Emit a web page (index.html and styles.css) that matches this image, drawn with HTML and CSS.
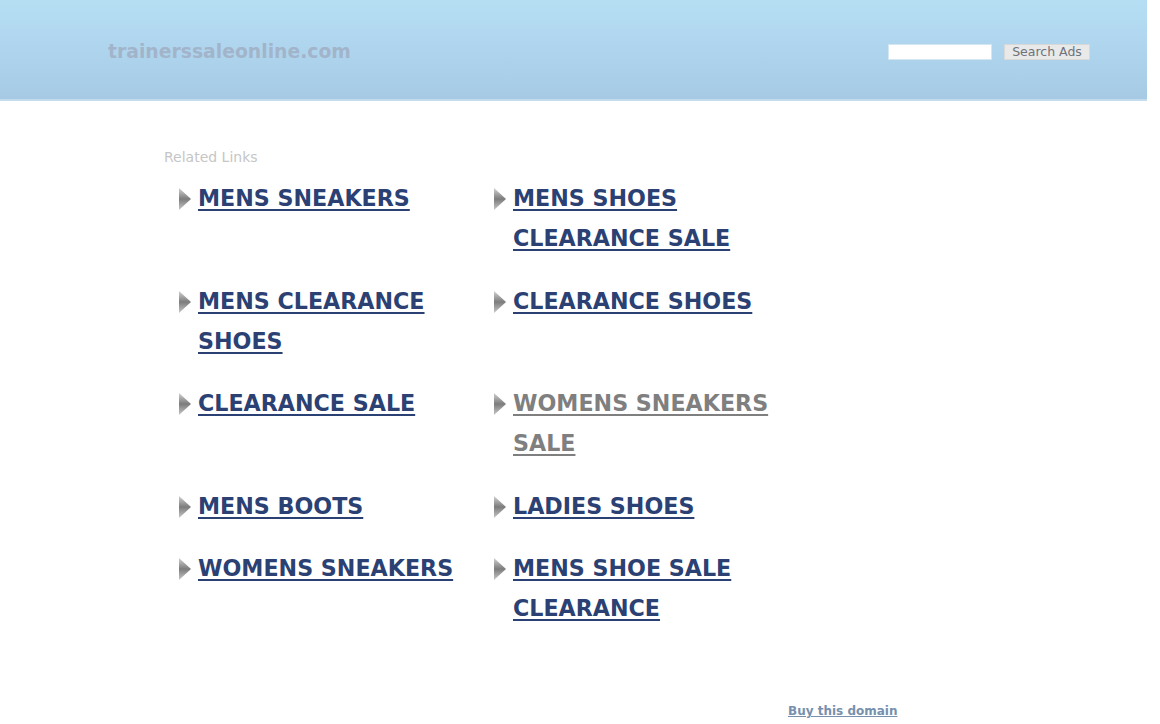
FILE: index.html
```html
<!DOCTYPE html>
<html>
<head>
<meta charset="utf-8">
<title>trainerssaleonline.com</title>
<link rel="stylesheet" href="styles.css">
</head>
<body>
<svg width="0" height="0" class="defs">
  <defs>
    <linearGradient id="ag" x1="0" y1="0" x2="0" y2="1">
      <stop offset="0" stop-color="#d2d2d2"/>
      <stop offset="0.5" stop-color="#7c7c7c"/>
      <stop offset="1" stop-color="#c8c8c8"/>
    </linearGradient>
  </defs>
</svg>
<header class="top">
  <div class="domain">trainerssaleonline.com</div>
  <form class="search">
    <input type="text" class="search-input">
    <button type="button" class="search-btn">Search Ads</button>
  </form>
</header>
<main class="content">
  <div class="related">Related Links</div>
  <ul class="links">
    <li class="item"><svg class="arrow" viewBox="0 0 12 22"><polygon points="0,0 12,11 0,22" fill="url(#ag)"/></svg><a href="#">MENS SNEAKERS</a></li>
    <li class="item"><svg class="arrow" viewBox="0 0 12 22"><polygon points="0,0 12,11 0,22" fill="url(#ag)"/></svg><a href="#">MENS SHOES CLEARANCE SALE</a></li>
    <li class="item"><svg class="arrow" viewBox="0 0 12 22"><polygon points="0,0 12,11 0,22" fill="url(#ag)"/></svg><a href="#">MENS CLEARANCE SHOES</a></li>
    <li class="item"><svg class="arrow" viewBox="0 0 12 22"><polygon points="0,0 12,11 0,22" fill="url(#ag)"/></svg><a href="#">CLEARANCE SHOES</a></li>
    <li class="item"><svg class="arrow" viewBox="0 0 12 22"><polygon points="0,0 12,11 0,22" fill="url(#ag)"/></svg><a href="#">CLEARANCE SALE</a></li>
    <li class="item"><svg class="arrow" viewBox="0 0 12 22"><polygon points="0,0 12,11 0,22" fill="url(#ag)"/></svg><a href="#" class="visited">WOMENS SNEAKERS SALE</a></li>
    <li class="item"><svg class="arrow" viewBox="0 0 12 22"><polygon points="0,0 12,11 0,22" fill="url(#ag)"/></svg><a href="#">MENS BOOTS</a></li>
    <li class="item"><svg class="arrow" viewBox="0 0 12 22"><polygon points="0,0 12,11 0,22" fill="url(#ag)"/></svg><a href="#">LADIES SHOES</a></li>
    <li class="item"><svg class="arrow" viewBox="0 0 12 22"><polygon points="0,0 12,11 0,22" fill="url(#ag)"/></svg><a href="#">WOMENS SNEAKERS</a></li>
    <li class="item"><svg class="arrow" viewBox="0 0 12 22"><polygon points="0,0 12,11 0,22" fill="url(#ag)"/></svg><a href="#">MENS SHOE SALE CLEARANCE</a></li>
  </ul>
  <div class="footer"><a href="#" class="buy">Buy this domain</a></div>
</main>
</body>
</html>
```
FILE: styles.css
```css
html, body {
  margin: 0;
  padding: 0;
  background: #ffffff;
  font-family: "DejaVu Sans", Verdana, sans-serif;
}
.defs {
  position: absolute;
  width: 0;
  height: 0;
}
.top {
  width: 1147px;
  height: 99px;
  background: linear-gradient(to bottom, #b5def3 0%, #afd5ee 50%, #a6cae4 100%);
  border-bottom: 2px solid #c2dbed;
  display: flex;
  align-items: flex-start;
  justify-content: space-between;
  box-sizing: content-box;
}
.domain {
  margin: 40px 0 0 108px;
  font-size: 18.8px;
  font-weight: bold;
  color: #a2b4ca;
  line-height: 24px;
}
.search {
  display: flex;
  align-items: center;
  margin: 44px 57px 0 0;
  gap: 12px;
}
.search-input {
  width: 104px;
  height: 16px;
  box-sizing: border-box;
  border: 1px solid #d6e6f0;
  background: #ffffff;
  padding: 0;
  margin: 0;
}
.search-btn {
  width: 86px;
  height: 16px;
  box-sizing: border-box;
  border: 1px solid #d8d8d8;
  background: #e9e9e9;
  color: #6c737c;
  font-family: "DejaVu Sans", Verdana, sans-serif;
  font-size: 12.5px;
  line-height: 14px;
  padding: 0;
  margin: 0;
}
.content {
  padding-left: 164px;
}
.related {
  margin-top: 48px;
  font-size: 14px;
  line-height: 16px;
  color: #c6c6c6;
}
.links {
  list-style: none;
  margin: 13px 0 0 15px;
  padding: 0;
  display: grid;
  grid-template-columns: 315px 315px;
  row-gap: 22.5px;
}
.item {
  display: flex;
  align-items: flex-start;
  gap: 7px;
  padding-right: 19px;
}
.arrow {
  width: 12px;
  height: 22px;
  flex: none;
  margin-top: 10px;
}
.item a {
  font-size: 22.2px;
  font-weight: bold;
  line-height: 40px;
  color: #2b4173;
  text-decoration: underline;
  text-decoration-thickness: 2px;
  text-underline-offset: 3px;
}
.item a.visited {
  color: #7f7f7f;
}
.footer {
  margin-top: 74px;
  padding-left: 624px;
  line-height: 16px;
}
.buy {
  font-size: 12px;
  font-weight: bold;
  color: #7690ad;
  text-decoration: underline;
}
```
